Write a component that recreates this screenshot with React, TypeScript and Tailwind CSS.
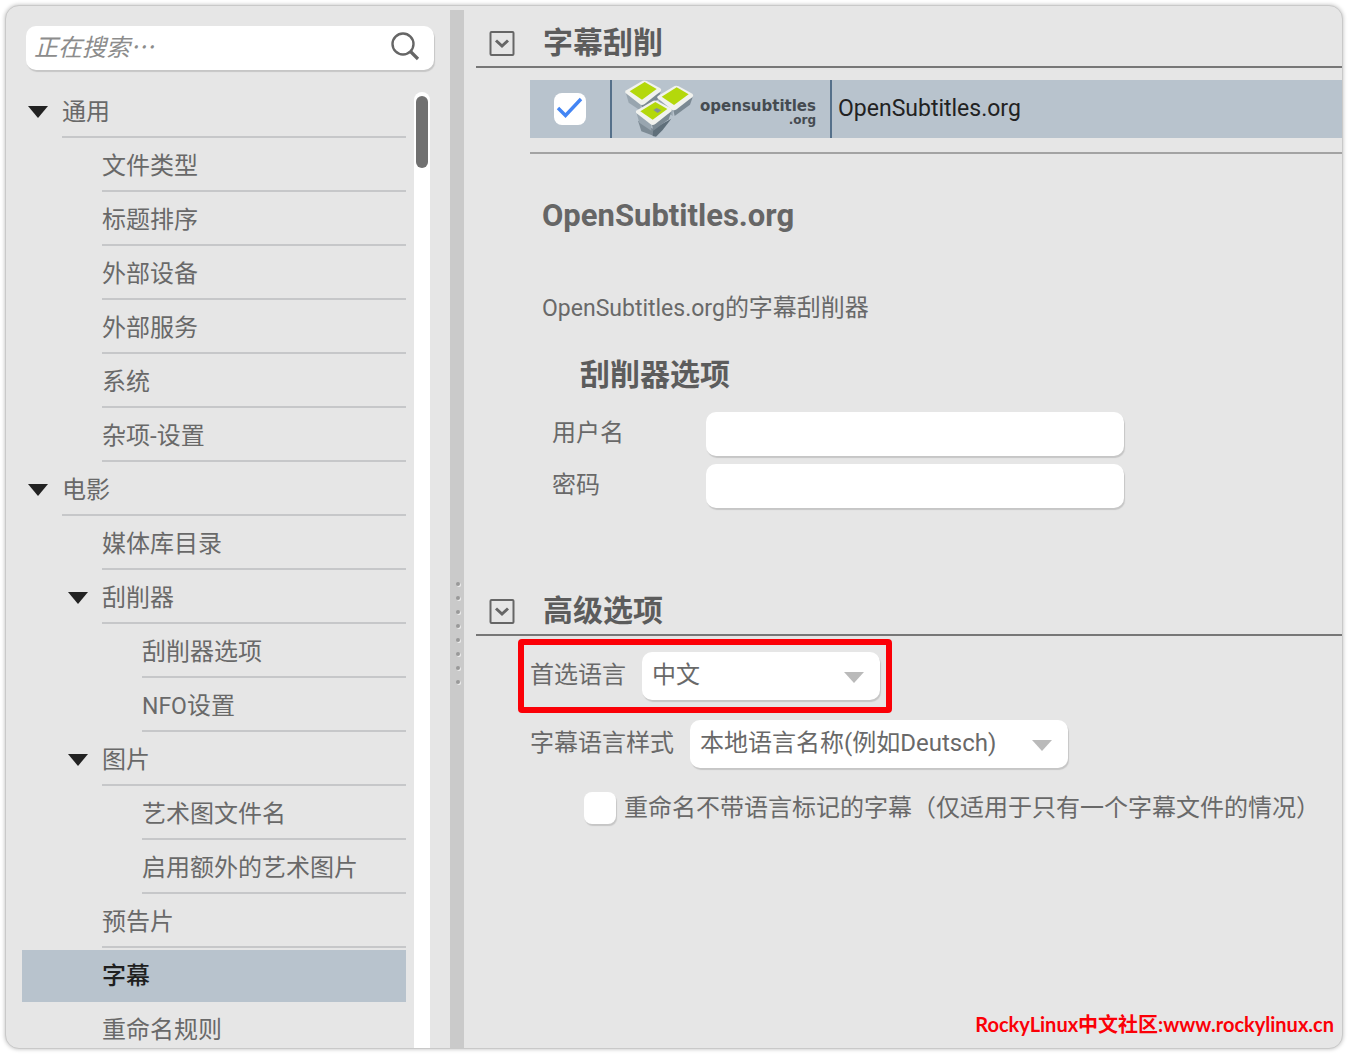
import { useState } from 'react'
import type { ReactNode } from 'react'
import clsx from 'clsx'

type TreeItem = {
  label: ReactNode
  id: string
  depth: number
  branch?: boolean
}

const tree: TreeItem[] = [
  { id: 'general', label: '通用', depth: 0, branch: true },
  { id: 'file-types', label: '文件类型', depth: 1 },
  { id: 'sorting', label: '标题排序', depth: 1 },
  { id: 'devices', label: '外部设备', depth: 1 },
  { id: 'services', label: '外部服务', depth: 1 },
  { id: 'system', label: '系统', depth: 1 },
  { id: 'misc', label: '杂项-设置', depth: 1 },
  { id: 'movies', label: '电影', depth: 0, branch: true },
  { id: 'sources', label: '媒体库目录', depth: 1 },
  { id: 'scraper', label: '刮削器', depth: 1, branch: true },
  { id: 'scraper-options', label: '刮削器选项', depth: 2 },
  { id: 'nfo', label: <><span className="text-[23px]">NFO</span>设置</>, depth: 2 },
  { id: 'images', label: '图片', depth: 1, branch: true },
  { id: 'artwork-names', label: '艺术图文件名', depth: 2 },
  { id: 'artwork-extra', label: '启用额外的艺术图片', depth: 2 },
  { id: 'trailer', label: '预告片', depth: 1 },
  { id: 'subtitles', label: '字幕', depth: 1 },
  { id: 'renamer', label: '重命名规则', depth: 1 },
]

const fieldShadow = 'shadow-[1px_2px_1px_#c6c6c6]'

function TreeRow({ item, selected, onSelect }: { item: TreeItem; selected: boolean; onSelect: () => void }) {
  return (
    <li
      className={clsx(
        'flex h-[54px] border-t-2 border-transparent bg-clip-padding',
        item.depth === 1 && !item.branch && 'pl-20',
        item.depth === 1 && item.branch && 'pl-10',
        item.depth === 2 && 'pl-[120px]',
        selected && 'bg-[#b8c3cd]',
      )}
    >
      {item.branch && (
        <span className="flex w-10 shrink-0 items-center pl-1.5">
          <svg width="20" height="12" viewBox="0 0 20 12" aria-hidden="true">
            <path d="M0 0H20L10 12Z" fill="#222" />
          </svg>
        </span>
      )}
      <button
        type="button"
        onClick={onSelect}
        className={clsx(
          'flex-1 border-b-2 pt-0.5 text-left',
          selected ? 'border-transparent font-medium text-[#1f1f1f]' : 'border-[#c6c7c9]',
        )}
      >
        {item.label}
      </button>
    </li>
  )
}

function SectionHeader({ title }: { title: string }) {
  return (
    <div className="flex h-[62px] items-center border-b-2 border-[#777] pt-3.5 pl-[13px]">
      <button type="button" aria-label={title} className="mr-7 shrink-0">
        <svg width="26" height="26" viewBox="0 0 26 26" fill="none" stroke="#666" aria-hidden="true">
          <rect x="1.5" y="2" width="23" height="23" rx="1" strokeWidth="2" />
          <path d="M7 10.5L13 16L19 10.5" strokeWidth="3" />
        </svg>
      </button>
      <h2 className="text-[30px] leading-10 font-bold text-[#5c5c5c]">{title}</h2>
    </div>
  )
}

function Cube({ x, y }: { x: number; y: number }) {
  return (
    <g transform={`translate(${x} ${y})`}>
      <path d="M4 40L48 66V92L12 68Z" fill="#98a5af" />
      <path d="M48 66L108 36L100 58L54 92Z" fill="#7b8993" />
      <path d="M2 38Q0 34 5 31L54 2Q60 0 66 3L107 25Q112 29 108 34L60 72Q52 77 46 73Z" fill="#f1f2ee" />
      <path d="M15 34L60 6L96 27L52 59Z" fill="#b4d80b" />
    </g>
  )
}

function OpenSubtitlesLogo() {
  return (
    <div className="flex items-center">
      <svg width="72" height="58" viewBox="70 28 216 174" className="shrink-0" aria-hidden="true">
        <Cube x={72} y={28} />
        <Cube x={168} y={44} />
        <path d="M112 150L160 176V196L122 182Z" fill="#7d8b95" />
        <path d="M158 174L212 144L186 178L166 198L156 196Z" fill="#5f6f7a" />
        <Cube x={104} y={88} />
        <path d="M158 118L168 112L182 119L171 127Z" fill="#84909a" />
      </svg>
      <span className="ml-1 pt-1.5 text-right font-['DejaVu_Sans',sans-serif] text-[15px] leading-4 font-bold text-[#454b51]">
        <span className="block">opensubtitles</span>
        <span className="block text-[12px] leading-3">.org</span>
      </span>
    </div>
  )
}

function Dropdown({ id, options, className }: { id: string; options: string[]; className: string }) {
  return (
    <div className={clsx('relative', className)}>
      <select
        id={id}
        className={clsx('h-12 w-full appearance-none rounded-[10px] bg-white pr-12 pb-0.5 pl-2.5', fieldShadow)}
      >
        {options.map((o) => (
          <option key={o}>{o}</option>
        ))}
      </select>
      <svg
        width="20"
        height="11"
        viewBox="0 0 20 11"
        className="pointer-events-none absolute top-5 right-4"
        aria-hidden="true"
      >
        <path d="M0 0H20L10 11Z" fill="#bababa" />
      </svg>
    </div>
  )
}

export default function App() {
  const [selected, setSelected] = useState('subtitles')
  const [enabled, setEnabled] = useState(true)

  return (
    <div className="h-screen bg-white p-[5px] font-[Roboto,'Noto_Sans_CJK_SC',sans-serif] text-[24px] leading-8 text-[#696969]">
      <div className="relative flex h-full overflow-hidden rounded-[14px] border border-[#c9c9c9] bg-[#e6e6e6] shadow-[0_0_4px_#bbb]">
        <aside className="flex w-[444px] shrink-0 flex-col pt-5">
          <div className={clsx('mr-4 ml-5 flex h-11 shrink-0 items-center rounded-[10px] bg-white', fieldShadow)}>
            <input
              type="search"
              aria-label="搜索"
              placeholder="正在搜索⋯"
              className="min-w-0 flex-1 bg-transparent pl-2 italic outline-none placeholder:text-[#8c8c8c]"
            />
            <button type="button" aria-label="搜索" className="mr-3.5 mb-1">
              <svg width="30" height="30" viewBox="0 0 30 30" fill="none" stroke="#666" aria-hidden="true">
                <circle cx="13" cy="13" r="10.5" strokeWidth="2.4" />
                <path d="M20.5 20.5L28 28" strokeWidth="3.2" />
              </svg>
            </button>
          </div>

          <div className="mt-3.5 flex min-h-0 flex-1">
            <ul className="ml-4 flex-1 overflow-hidden">
              {tree.map((item) => (
                <TreeRow
                  key={item.id}
                  item={item}
                  selected={item.id === selected}
                  onSelect={() => setSelected(item.id)}
                />
              ))}
            </ul>
            <div className="mt-2 mr-5 ml-2 w-4 rounded-t-lg bg-white px-0.5 pt-1">
              <div className="h-[72px] rounded-full bg-[#707070]" />
            </div>
          </div>
        </aside>

        {/* Splitter */}
        <div className="mt-1 mr-3 flex w-3.5 shrink-0 flex-col items-center justify-center gap-2.5 bg-[#cacaca] pt-[207px] pl-0.5">
          {Array.from({ length: 8 }, (_, i) => (
            <span key={i} className="size-1 shrink-0 rounded-full bg-[#999] shadow-[1px_1px_0_#eee]" />
          ))}
        </div>

        <main className="min-w-0 flex-1">
          <SectionHeader title="字幕刮削" />
          <div className="mt-3 ml-[54px] border-b-2 border-[#a3a3a3] pb-3.5">
            <table className="w-full">
              <tbody>
                <tr className="h-[58px] bg-[#b8c3cd] text-[#222]">
                  <td className="w-[81px] border-r-2 border-[#55708a] p-0">
                    <span className="relative mx-auto block size-8">
                      <input
                        type="checkbox"
                        aria-label="OpenSubtitles.org"
                        checked={enabled}
                        onChange={(e) => setEnabled(e.target.checked)}
                        className="block size-8 appearance-none rounded-lg bg-white"
                      />
                      {enabled && (
                        <svg
                          width="32"
                          height="32"
                          viewBox="0 0 32 32"
                          fill="none"
                          className="pointer-events-none absolute inset-0"
                          aria-hidden="true"
                        >
                          <path d="M4 15L11.5 22.5L27 6" stroke="#4385f4" strokeWidth="3.4" />
                        </svg>
                      )}
                    </span>
                  </td>
                  <td className="w-[220px] border-r-2 border-[#55708a] p-0 pl-3">
                    <OpenSubtitlesLogo />
                  </td>
                  <td className="p-0 pl-1.5 text-[23px]">OpenSubtitles.org</td>
                </tr>
              </tbody>
            </table>
          </div>

          <div className="pl-[66px]">
            <h2 className="mt-[42px] text-[31px] leading-10 font-bold text-[#666]">OpenSubtitles.org</h2>
            <p className="mt-14">
              <span className="text-[23px]">OpenSubtitles.org</span>的字幕刮削器
            </p>
            <h3 className="mt-[30px] ml-[38px] text-[30px] leading-10 font-bold text-[#5c5c5c]">刮削器选项</h3>
            <form className="mt-[17px] ml-2.5 grid grid-cols-[154px_minmax(0,418px)] gap-y-2">
              <label htmlFor="username" className="pt-[5px]">用户名</label>
              <input id="username" type="text" className={clsx('h-11 rounded-[10px] bg-white px-3', fieldShadow)} />
              <label htmlFor="password" className="pt-[5px]">密码</label>
              <input id="password" type="password" className={clsx('h-11 rounded-[10px] bg-white px-3', fieldShadow)} />
            </form>
          </div>

          <div className="mt-[66px]">
            <SectionHeader title="高级选项" />
          </div>
          <div className="mt-[3px] ml-[42px] flex h-[74px] w-fit items-center rounded-sm border-6 border-[#fb0007] px-1.5">
            <label htmlFor="language" className="mr-4 pb-0.5">首选语言</label>
            <Dropdown id="language" options={['中文', 'English', 'Deutsch']} className="w-[238px]" />
          </div>
          <div className="mt-[7px] ml-[54px] flex items-center">
            <label htmlFor="style" className="mr-4 pb-0.5">字幕语言样式</label>
            <Dropdown id="style" options={['本地语言名称(例如Deutsch)', 'ISO 639-1']} className="w-[378px]" />
          </div>
          <div className="mt-6 ml-[108px] flex items-center">
            <input
              id="rename"
              type="checkbox"
              className={clsx('mr-2 size-8 shrink-0 appearance-none rounded-lg bg-white checked:bg-[#4385f4]', fieldShadow)}
            />
            <label htmlFor="rename" className="whitespace-nowrap">
              重命名不带语言标记的字幕（仅适用于只有一个字幕文件的情况）
            </label>
          </div>
        </main>

        <p className="absolute right-2 bottom-2 font-[Lato,'Noto_Sans_CJK_SC',sans-serif] text-[20px] font-bold text-[#fb0007]">
          RockyLinux中文社区:www.rockylinux.cn
        </p>
      </div>
    </div>
  )
}
